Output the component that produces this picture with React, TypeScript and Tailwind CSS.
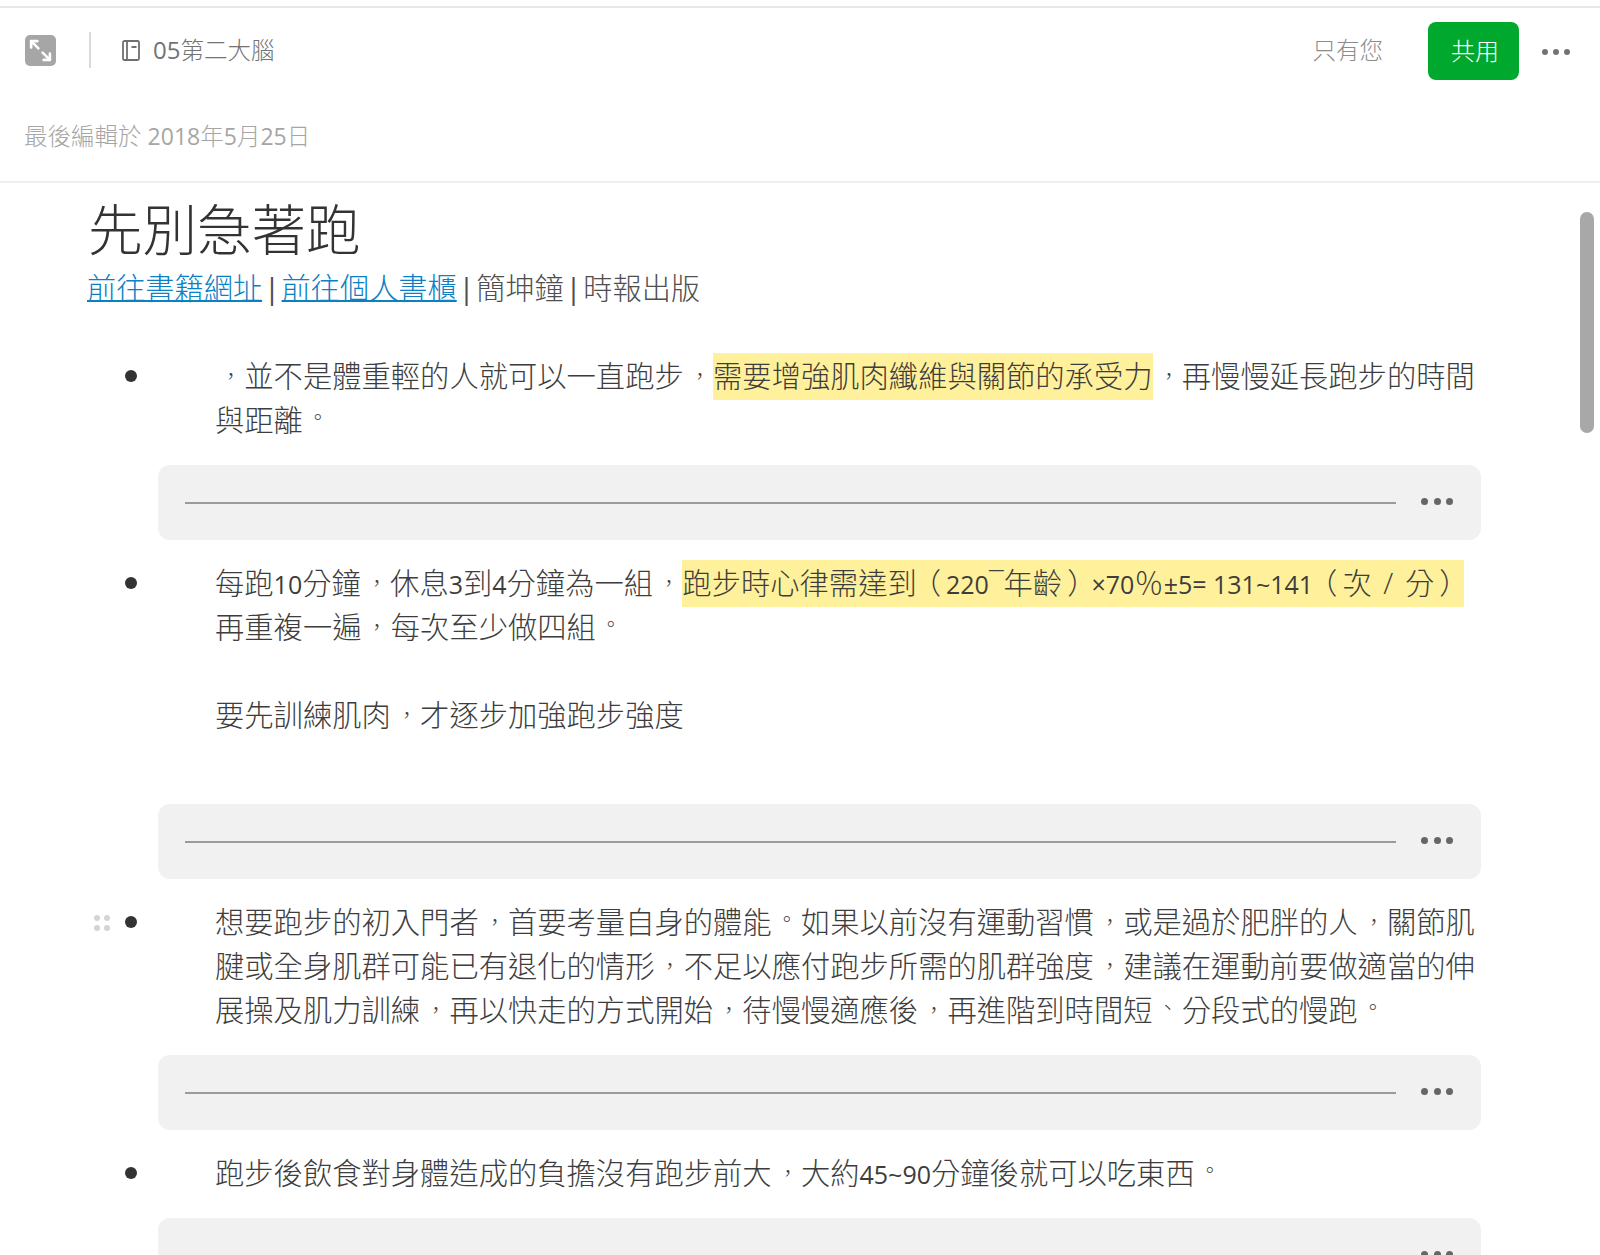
import { Maximize2 } from "lucide-react";

const cjk = '"Open Sans", "Noto Sans CJK TC", sans-serif';

const Mark = ({ children }: { children: React.ReactNode }) => (
  <span className="bg-[#fff09b] pb-[4px] pt-[3px]">{children}</span>
);

const Num = ({ children }: { children: React.ReactNode }) => (
  <span className="text-[25px] font-normal leading-[0]">{children}</span>
);

// the installed font sets punctuation low-left and large, the reference has it small and centred in the cell
const Comma = () => <span className="inline-block translate-x-[1px] scale-[0.7]">，</span>;
const Stop = ({ mark = "。" }: { mark?: string }) => <span className="inline-block -translate-y-[3px] scale-[0.7]">{mark}</span>;
const Open = () => <span className="inline-block -translate-x-[5px]">（</span>;
const Close = () => <span className="inline-block translate-x-[5px]">）</span>;

const Sep = () => <span className="mx-[1.5px] text-[30px] font-normal leading-[0]">|</span>;

const Divider = () => (
  <div className="ml-[158px] mr-[119px] flex h-[75px] items-center rounded-[12px] bg-[#f1f1f1] pl-[27px] pr-[28px]">
    <div className="h-[2px] flex-1 bg-[#9b9b9b]" />
    <div className="mb-[3px] ml-[25px] flex gap-[5.5px]">
      <span className="h-[7px] w-[7px] rounded-full bg-[#666666]" />
      <span className="h-[7px] w-[7px] rounded-full bg-[#666666]" />
      <span className="h-[7px] w-[7px] rounded-full bg-[#666666]" />
    </div>
  </div>
);

const Bullet = ({ children, handle }: { children: React.ReactNode; handle?: boolean }) => (
  <div className="relative ml-[215px] mr-[119px] text-[29.3px] font-light leading-[44px] text-[#3d3d3d]">
    {handle && (
      <div className="absolute left-[-121px] top-[15px] grid grid-cols-2 gap-x-[4px] gap-y-[4px]">
        <span className="h-[6px] w-[6px] rounded-full bg-[#d4d4d4]" />
        <span className="h-[6px] w-[6px] rounded-full bg-[#d4d4d4]" />
        <span className="h-[6px] w-[6px] rounded-full bg-[#d4d4d4]" />
        <span className="h-[6px] w-[6px] rounded-full bg-[#d4d4d4]" />
      </div>
    )}
    <span className="absolute left-[-90px] top-[16px] h-[12px] w-[12px] rounded-full bg-[#333333]" />
    {children}
  </div>
);

export default function App() {
  return (
    <div lang="zh-Hant" className="relative h-[1255px] w-[1600px] overflow-hidden bg-white" style={{ fontFamily: cjk }}>
      <div className="mt-[6px] h-[2px] bg-[#e8e8e8]" />
      <div className="flex h-[84px] items-center pl-[25px] pr-[30px]">
        <div className="flex h-[31px] w-[31px] items-center justify-center rounded-[5px] bg-[#a6a6a6]">
          <Maximize2 size={25} color="#ffffff" strokeWidth={2.5} className="-scale-x-100" />
        </div>
        <div className="ml-[33px] h-[36px] w-[2px] bg-[#d9d9d9]" />
        <svg className="ml-[31px]" width="18" height="21" viewBox="0 0 18 21" fill="none" stroke="#6f6f6f" strokeWidth="1.8">
          <rect x="1" y="1" width="16" height="19" rx="1.5" />
          <path d="M5 1v19M9.5 7h5" />
        </svg>
        <span className="ml-[13px] mt-[1px] text-[23.5px] font-light text-[#737373]"><span className="text-[24px] font-normal">05</span>第二大腦</span>
        <span className="ml-auto mt-[2px] text-[23.5px] font-light text-[#8c8c8c]">只有您</span>
        <button className="ml-[45px] mt-[2px] flex h-[58px] w-[91px] items-center justify-center rounded-[8px] bg-[#00a82d] pl-[3px] text-[24px] font-light text-white">
          共用
        </button>
        <div className="ml-[23px] mt-[3px] flex gap-[5px]">
          <span className="h-[6px] w-[6px] rounded-full bg-[#737373]" />
          <span className="h-[6px] w-[6px] rounded-full bg-[#737373]" />
          <span className="h-[6px] w-[6px] rounded-full bg-[#737373]" />
        </div>
      </div>
      <div className="flex h-[91px] items-start border-b-2 border-[#efefef] pl-[24px] pt-[27px]">
        <span className="text-[23.5px] font-light text-[#a6a6a6]">最後編輯於 <span className="text-[23px] font-normal">2018</span>年<span className="text-[23px] font-normal">5</span>月<span className="text-[23px] font-normal">25</span>日</span>
      </div>
      <div className="ml-[88px] mt-[10px] text-[54.5px] font-light leading-[72px] text-[#333333]">先別急著跑</div>
      <div className="ml-[87px] mt-[3px] text-[29.2px] font-light leading-[40px] text-[#4f4f4f]">
        <a className="text-[#0b80c4] underline decoration-2">前往書籍網址</a><Sep /><a className="text-[#0b80c4] underline decoration-2">前往個人書櫃</a><Sep />簡坤鐘<Sep />時報出版
      </div>
      <div className="mt-[46px]">
        <Bullet><Comma />並不是體重輕的人就可以一直跑步<Comma /><Mark>需要增強肌肉纖維與關節的承受力</Mark><Comma />再慢慢延長跑步的時間與距離<Stop /></Bullet>
      </div>
      <div className="mt-[23px]">
        <Divider />
      </div>
      <div className="mt-[21px]">
        <Bullet>
          每跑<Num>10</Num>分鐘<Comma />休息<Num>3</Num>到<Num>4</Num>分鐘為一組<Comma />
          <Mark>跑步時心律需達到<Open /><Num>220</Num>¯年齡<Close /><Num>×70</Num>％<Num>±5= 131~141</Num><Open />次<span className="mx-[4px]"> / </span>分<Close /></Mark>
          <br />
          再重複一遍<Comma />每次至少做四組<Stop />
          <br />
          <br />
          要先訓練肌肉<Comma />才逐步加強跑步強度
          <br />
          <br />
        </Bullet>
      </div>
      <div className="mt-[23px]">
        <Divider />
      </div>
      <div className="mt-[21px]">
        <Bullet handle>想要跑步的初入門者<Comma />首要考量自身的體能<Stop />如果以前沒有運動習慣<Comma />或是過於肥胖的人<Comma />關節肌腱或全身肌群可能已有退化的情形<Comma />不足以應付跑步所需的肌群強度<Comma />建議在運動前要做適當的伸展操及肌力訓練<Comma />再以快走的方式開始<Comma />待慢慢適應後<Comma />再進階到時間短<Stop mark="、" />分段式的慢跑<Stop /></Bullet>
      </div>
      <div className="mt-[23px]">
        <Divider />
      </div>
      <div className="mt-[21px]">
        <Bullet>跑步後飲食對身體造成的負擔沒有跑步前大<Comma />大約<Num>45~90</Num>分鐘後就可以吃東西<Stop /></Bullet>
      </div>
      <div className="mt-[23px]">
        <Divider />
      </div>
      <div className="absolute left-[1580px] top-[212px] h-[221px] w-[14px] rounded-full bg-[#a8a8a8]" />
    </div>
  );
}
